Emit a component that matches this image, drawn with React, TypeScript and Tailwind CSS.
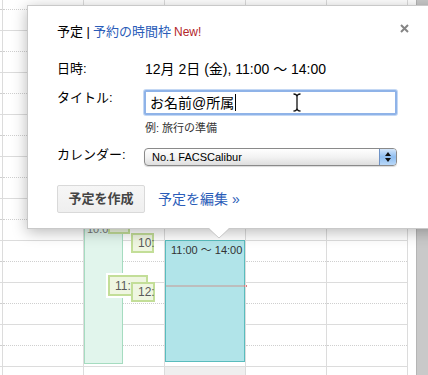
import React from "react";

const rows = Array.from({ length: 10 });

function GridColumn({ className, children }: { className: string; children?: React.ReactNode }) {
  return (
    <div className={`relative shrink-0 ${className}`}>
      <div className="-mt-[11px] flex flex-col">
        {rows.map((_, i) => (
          <div key={i} className="h-[42px] shrink-0 border-b border-[#dcdcdc]">
            <div className="h-[21px] border-b border-dotted border-[#cfcfcf]" />
          </div>
        ))}
      </div>
      {children}
    </div>
  );
}

function Chip({ label, className }: { label: string; className: string }) {
  return (
    <div
      className={`absolute flex items-center border-2 border-[#c3de98] bg-[#eff6e1] pl-[5px] text-[12px] leading-none text-[#5a5a5a] ${className}`}
    >
      {label}
    </div>
  );
}

function Popup() {
  return (
    <div className="absolute left-[27px] top-[5px] h-[224px] w-[420px] border border-[#c9c9c9] bg-white pl-[29px] shadow-[0_3px_14px_rgba(0,0,0,0.28)]">
      {/* header */}
      <div className="mt-[18px] flex items-baseline text-[13px] leading-[16px]">
        <span className="text-black">予定 | </span>
        <span className="ml-[3px] text-[#2a5cb8]">予約の時間枠</span>
        <span className="ml-[3px] text-[12px] text-[#b3262b]">New!</span>
      </div>
      <svg className="absolute left-[372px] top-[18px]" width="9" height="9" viewBox="0 0 9 9">
        <path d="M1 1 L8 8 M8 1 L1 8" stroke="#858585" strokeWidth="2" />
      </svg>

      <div className="mt-[19px] flex items-center leading-[20px]">
        <div className="w-[88px] shrink-0 text-[13px] text-black">日時:</div>
        <div className="text-[14px] text-black">12月 2日 (金), 11:00 ～ 14:00</div>
      </div>

      <div className="mt-[11px] flex items-start">
        <div className="w-[87px] shrink-0 text-[13px] leading-[16px] text-black">タイトル:</div>
        <div className="relative flex h-[25px] w-[253px] items-center rounded-[2px] border-2 border-[#8fb3e8] bg-white pl-[4px] shadow-[0_0_0_1px_#c4d8f4]">
          <span className="text-[14px] leading-none text-black">お名前@所属</span>
          <span className="ml-px h-[17px] w-px bg-black" />
          <svg className="absolute left-[146px] top-[1px]" width="10" height="19" viewBox="0 0 10 19">
            <path
              d="M1.5 1 Q5 1 5 4 Q5 1 8.5 1 M5 4 V15 M1.5 18 Q5 18 5 15 Q5 18 8.5 18"
              stroke="#111"
              strokeWidth="1.3"
              fill="none"
            />
          </svg>
        </div>
      </div>

      <div className="ml-[88px] mt-[6px] text-[11px] leading-[14px] text-[#333]">例: 旅行の準備</div>

      <div className="mt-[13px] flex items-start">
        <div className="-mt-[1px] w-[87px] shrink-0 text-[13px] leading-[16px] text-black">カレンダー:</div>
        <div className="flex h-[18px] w-[253px] overflow-hidden rounded-[4px] border border-[#8a8a8a] bg-linear-to-b from-white via-[#f3f3f3] to-[#dedede] shadow-[0_1px_1px_rgba(0,0,0,0.15)]">
          <div className="flex flex-1 items-center pl-[7px] font-['Liberation_Sans',sans-serif] text-[11px] leading-none text-black">
            No.1 FACSCalibur
          </div>
          <div className="flex w-[17px] flex-col items-center justify-center gap-[2px] border-l border-[#6f93c6] bg-linear-to-b from-[#d4e6fa] via-[#8ebdf0] to-[#b9d8f8]">
            <svg width="6" height="4" viewBox="0 0 6 4">
              <path d="M3 0 L6 4 L0 4 Z" fill="#111" />
            </svg>
            <svg width="6" height="4" viewBox="0 0 6 4">
              <path d="M0 0 L6 0 L3 4 Z" fill="#111" />
            </svg>
          </div>
        </div>
      </div>

      <div className="mt-[19px] flex items-center">
        <button className="h-[28px] w-[88px] rounded-[2px] border border-[#d9d9d9] bg-linear-to-b from-[#f6f6f6] to-[#efefef] text-[13px] font-bold text-[#444]">
          予定を作成
        </button>
        <a className="ml-[13px] text-[14px] text-[#2a5cb8]">予定を編集 »</a>
      </div>

      <svg className="absolute left-[180px] top-[222px]" width="22" height="11" viewBox="0 0 22 11">
        <path d="M0 -1 L11 10 L22 -1 Z" fill="white" />
        <path d="M0 0 L11 10 L22 0" stroke="#c9c9c9" strokeWidth="1" fill="none" />
      </svg>
    </div>
  );
}

export default function App() {
  return (
    <div className="relative h-[375px] w-[428px] overflow-hidden bg-white font-['Liberation_Sans','Noto_Sans_CJK_JP',sans-serif]">
      <div className="flex h-full">
        <GridColumn className="w-[2px]" />
        <GridColumn className="w-[81px] border-l border-[#dcdcdc]" />
        <GridColumn className="w-[81px] border-l border-[#dcdcdc]">
          <div className="absolute left-0 top-[180px] h-[184px] w-[39px] border border-[#a5dcc0] bg-[#e1f5ec] pl-[2px] pt-[40px] text-[11px] text-[#777]">
            10:00
          </div>
          <Chip label="" className="left-[24px] top-[212px] h-[22px] w-[22px]" />
          <Chip label="10:" className="left-[47px] top-[233px] h-[20px] w-[23px]" />
          <Chip label="11:" className="left-[24px] top-[275px] h-[21px] w-[40px] shadow-[0_0_0_2px_white]" />
          <Chip label="12:" className="left-[47px] top-[282px] h-[20px] w-[24px]" />
        </GridColumn>
        <GridColumn className="w-[81px] border-l border-[#dcdcdc]">
          <div className="absolute inset-x-0 top-[367px] bottom-0 bg-[#efefef]" />
          <div className="absolute left-0 top-[240px] h-[122px] w-[80px] border border-[#59bcbd] bg-[#b1e4e9] pl-[5px] pt-[2px] text-[11px] leading-[14px] text-[#333]">
            11:00 ～ 14:00
          </div>
          <div className="absolute left-[1px] top-[285px] h-[2px] w-[79px] bg-[#bdbdbd]" />
          <div className="absolute left-[79px] top-[285px] h-[2px] w-[3px] bg-[#e07a7a]" />
        </GridColumn>
        <GridColumn className="w-[81px] border-l border-[#dcdcdc]" />
        <GridColumn className="w-[81px] border-l border-[#dcdcdc]" />
        <div className="w-[9px] shrink-0 border-l border-[#dcdcdc]" />
        <div className="w-[12px] shrink-0 border-l border-[#b5b5b5] bg-[#c9c9c9]" />
      </div>
      <Popup />
    </div>
  );
}
